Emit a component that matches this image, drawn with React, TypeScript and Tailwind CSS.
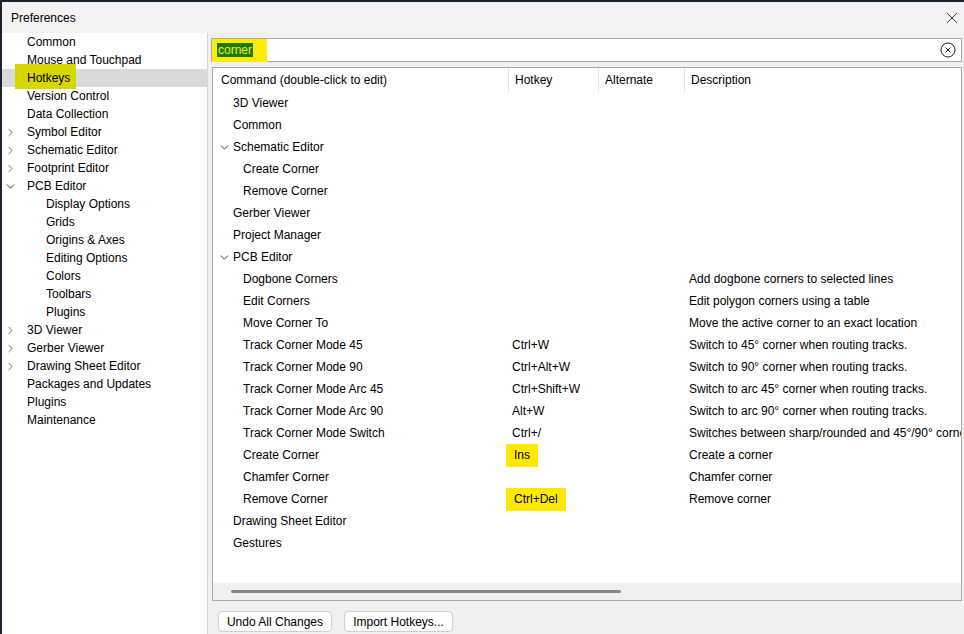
import { X, ChevronRight, ChevronDown } from 'lucide-react';

type TreeItem = { label: string; level: 0 | 1; chevron?: 'right' | 'down'; selected?: boolean };

const TREE: TreeItem[] = [
  { label: 'Common', level: 0 },
  { label: 'Mouse and Touchpad', level: 0 },
  { label: 'Hotkeys', level: 0, selected: true },
  { label: 'Version Control', level: 0 },
  { label: 'Data Collection', level: 0 },
  { label: 'Symbol Editor', level: 0, chevron: 'right' },
  { label: 'Schematic Editor', level: 0, chevron: 'right' },
  { label: 'Footprint Editor', level: 0, chevron: 'right' },
  { label: 'PCB Editor', level: 0, chevron: 'down' },
  { label: 'Display Options', level: 1 },
  { label: 'Grids', level: 1 },
  { label: 'Origins & Axes', level: 1 },
  { label: 'Editing Options', level: 1 },
  { label: 'Colors', level: 1 },
  { label: 'Toolbars', level: 1 },
  { label: 'Plugins', level: 1 },
  { label: '3D Viewer', level: 0, chevron: 'right' },
  { label: 'Gerber Viewer', level: 0, chevron: 'right' },
  { label: 'Drawing Sheet Editor', level: 0, chevron: 'right' },
  { label: 'Packages and Updates', level: 0 },
  { label: 'Plugins', level: 0 },
  { label: 'Maintenance', level: 0 },
];

type Row = { cmd: string; level: 0 | 1; open?: boolean; hotkey?: string; mark?: boolean; desc?: string };

const ROWS: Row[] = [
  { cmd: '3D Viewer', level: 0 },
  { cmd: 'Common', level: 0 },
  { cmd: 'Schematic Editor', level: 0, open: true },
  { cmd: 'Create Corner', level: 1 },
  { cmd: 'Remove Corner', level: 1 },
  { cmd: 'Gerber Viewer', level: 0 },
  { cmd: 'Project Manager', level: 0 },
  { cmd: 'PCB Editor', level: 0, open: true },
  { cmd: 'Dogbone Corners', level: 1, desc: 'Add dogbone corners to selected lines' },
  { cmd: 'Edit Corners', level: 1, desc: 'Edit polygon corners using a table' },
  { cmd: 'Move Corner To', level: 1, desc: 'Move the active corner to an exact location' },
  { cmd: 'Track Corner Mode 45', level: 1, hotkey: 'Ctrl+W', desc: 'Switch to 45° corner when routing tracks.' },
  { cmd: 'Track Corner Mode 90', level: 1, hotkey: 'Ctrl+Alt+W', desc: 'Switch to 90° corner when routing tracks.' },
  { cmd: 'Track Corner Mode Arc 45', level: 1, hotkey: 'Ctrl+Shift+W', desc: 'Switch to arc 45° corner when routing tracks.' },
  { cmd: 'Track Corner Mode Arc 90', level: 1, hotkey: 'Alt+W', desc: 'Switch to arc 90° corner when routing tracks.' },
  { cmd: 'Track Corner Mode Switch', level: 1, hotkey: 'Ctrl+/', desc: 'Switches between sharp/rounded and 45°/90° corners when routing tracks.' },
  { cmd: 'Create Corner', level: 1, hotkey: 'Ins', mark: true, desc: 'Create a corner' },
  { cmd: 'Chamfer Corner', level: 1, desc: 'Chamfer corner' },
  { cmd: 'Remove Corner', level: 1, hotkey: 'Ctrl+Del', mark: true, desc: 'Remove corner' },
  { cmd: 'Drawing Sheet Editor', level: 0 },
  { cmd: 'Gestures', level: 0 },
];

function ClearIcon() {
  return (
    <svg width="16" height="16" viewBox="0 0 16 16" fill="none" stroke="#1a1a1a" strokeWidth="1">
      <circle cx="8" cy="8" r="7" />
      <path d="M5.5 5.5 L10.5 10.5 M10.5 5.5 L5.5 10.5" />
    </svg>
  );
}

export default function App() {
  return (
    <div
      className="w-[964px] h-[634px] overflow-hidden flex flex-col bg-[#f0f0f0] border-t-2 border-l-2 border-[#1b2230] text-[12px] text-black"
      style={{ fontFamily: '"Liberation Sans", Arial, sans-serif' }}
    >
      {/* Title bar */}
      <div className="h-[31px] shrink-0 flex items-center justify-between bg-[#f3f3f3] pl-[9px] pr-[3px]">
        <span className="text-[12px]">Preferences</span>
        <X className="w-[18px] h-[18px] text-[#222]" strokeWidth={1.2} />
      </div>

      <div className="flex flex-1 min-h-0">
        {/* Tree */}
        <div className="w-[206px] shrink-0 bg-white border-r border-[#d6d6d6]">
          {TREE.map((t, i) => (
            <div
              key={i}
              className={`relative h-[18px] flex items-center ${t.selected ? 'bg-[#d9d9d9]' : ''}`}
            >
              {t.selected && (
                <span className="absolute left-[13px] top-[-5px] w-[61px] h-[25px] bg-[#d7d700]" />
              )}
              <span className="w-[25px] shrink-0 flex justify-center pr-[9px]">
                {t.chevron === 'right' && <ChevronRight className="w-[13px] h-[13px] text-[#707070]" strokeWidth={1.8} />}
                {t.chevron === 'down' && <ChevronDown className="w-[13px] h-[13px] text-[#333]" strokeWidth={1.8} />}
              </span>
              <span className={`relative whitespace-nowrap ${t.level === 1 ? 'pl-[19px]' : ''}`}>{t.label}</span>
            </div>
          ))}
        </div>

        {/* Right panel */}
        <div className="flex-1 min-w-0 flex flex-col pl-[3px] pr-[2px] pt-[5px]">
          {/* Search */}
          <div className="h-[24px] shrink-0 bg-white border border-[#a8a8a8] flex items-center justify-between pr-[5px]">
            <div className="h-[23px] w-[55px] bg-[#ffec00] flex items-center pl-[5px]">
              <span className="bg-[#1d7a0c] text-[#e8f01a] leading-[14px] px-[1px]">corner</span>
            </div>
            <ClearIcon />
          </div>

          {/* Table */}
          <div className="mt-[5px] ml-[1px] h-[534px] shrink-0 bg-white border border-[#a8a8a8] flex flex-col overflow-hidden">
            <div className="h-[24px] shrink-0 flex items-center">
              <div className="w-[296px] shrink-0 pl-[8px] h-full flex items-center border-r border-[#e3e3e3]">Command (double-click to edit)</div>
              <div className="w-[90px] shrink-0 pl-[6px] h-full flex items-center border-r border-[#e3e3e3]">Hotkey</div>
              <div className="w-[86px] shrink-0 pl-[6px] h-full flex items-center border-r border-[#e3e3e3]">Alternate</div>
              <div className="flex-1 pl-[6px] h-full flex items-center">Description</div>
            </div>
            <div className="flex-1 min-h-0">
              {ROWS.map((r, i) => (
                <div key={i} className="h-[22px] flex items-center whitespace-nowrap">
                  <div className="w-[296px] shrink-0 flex items-center">
                    <span className="w-[20px] shrink-0 flex justify-end pr-[2px]">
                      {r.open && <ChevronDown className="w-[13px] h-[13px] text-[#333]" strokeWidth={1.8} />}
                    </span>
                    <span className={r.level === 1 ? 'pl-[10px]' : ''}>{r.cmd}</span>
                  </div>
                  <div className="w-[90px] shrink-0 pl-[3px]">
                    {r.hotkey && (
                      <span className={r.mark ? 'inline-block bg-[#ffe900] px-[8px] leading-[23px] ml-[-6px]' : ''}>
                        {r.hotkey}
                      </span>
                    )}
                  </div>
                  <div className="w-[86px] shrink-0" />
                  <div className="flex-1 pl-[4px] overflow-hidden">{r.desc}</div>
                </div>
              ))}
            </div>
            {/* Horizontal scrollbar */}
            <div className="h-[17px] shrink-0 bg-[#f0f0f0] flex items-center pl-[18px]">
              <div className="w-[390px] h-[3px] bg-[#868686] rounded-full" />
            </div>
          </div>

          {/* Buttons */}
          <div className="flex gap-[12px] mt-[10px] ml-[7px]">
            <button className="h-[21px] w-[114px] rounded-[4px] border border-[#cfcfcf] bg-[#fdfdfd] text-[12px]">Undo All Changes</button>
            <button className="h-[21px] w-[109px] rounded-[4px] border border-[#cfcfcf] bg-[#fdfdfd] text-[12px]">Import Hotkeys...</button>
          </div>
        </div>
      </div>
    </div>
  );
}
